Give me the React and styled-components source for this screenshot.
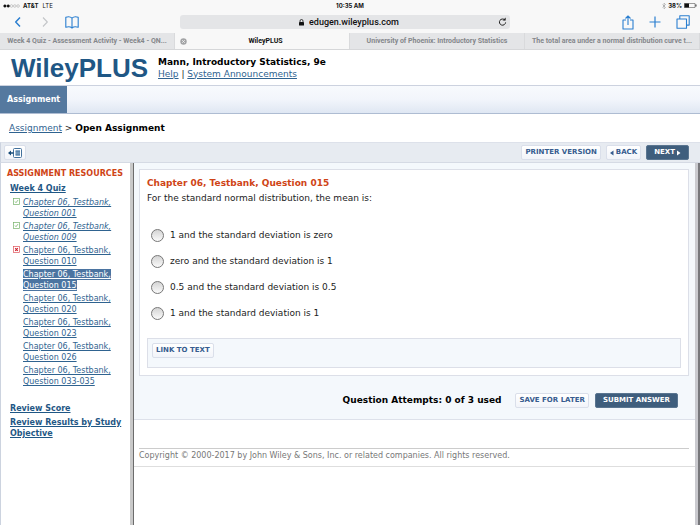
import React, { useState } from 'react'

import styled, { createGlobalStyle, css } from 'styled-components'

const GlobalStyle = createGlobalStyle`
  * {
    box-sizing: border-box;
  }

  body {
    margin: 0;
    background: #ffffff;
    color: #1c1c1c;
    font-family: "DejaVu Sans", Verdana, sans-serif;
    font-size: 9px;
    line-height: 11px;
  }
`

const browserFont = '"Inter", "Liberation Sans", sans-serif'
const linkBlue = '#2f6390'

const Page = styled.div`
  display: flex;
  flex-direction: column;
  min-height: 100vh;
`

/* Browser chrome */

const BrowserChrome = styled.header`
  background: #f8f8f8;
  color: #111111;
  font-family: ${browserFont};
`

const StatusBar = styled.div`
  display: grid;
  grid-template-columns: 1fr auto 1fr;
  align-items: center;
  height: 11px;
  padding: 0 3px;
  font-size: 6px;
  font-weight: 700;
`

const StatusGroup = styled.div`
  display: flex;
  align-items: center;
  justify-content: ${props => props.$end ? 'flex-end' : 'flex-start'};
  gap: ${props => props.$end ? 2 : 3}px;
`

const Network = styled.span`
  font-weight: 400;
  padding-left: 1px;
`

const AddressRow = styled.div`
  display: grid;
  grid-template-columns: 180px 1fr 180px;
  align-items: center;
  height: 22px;
`

const ToolGroup = styled.div`
  display: flex;
  align-items: center;
  gap: ${props => props.$end ? 15 : 13}px;
  justify-content: ${props => props.$end ? 'flex-end' : 'flex-start'};
  padding: ${props => props.$end ? '0 10px 0 0' : '0 0 0 11px'};
`

const IconButton = styled.button`
  display: flex;
  align-items: center;
  justify-content: center;
  padding: 0;
  border: 0;
  background: none;
  color: ${props => props.$muted ? '#c4c6c9' : '#2b7fd0'};
`

const AddressBar = styled.div`
  display: flex;
  align-items: center;
  height: 14px;
  margin-right: 10px;
  padding: 0 3px 0 22px;
  border-radius: 3px;
  background: #e4e5e7;
`

const AddressInput = styled.input`
  width: 92px;
  padding: 0;
  border: 0;
  background: none;
  color: #111111;
  font: 500 9px/12px Roboto, "Liberation Sans", sans-serif;
`

const AddressCenter = styled.div`
  display: flex;
  flex: 1;
  align-items: center;
  justify-content: center;
  gap: 5px;
`

const TabStrip = styled.nav`
  display: grid;
  grid-template-columns: repeat(4, 1fr);
  height: 17px;
  border-bottom: 1px solid #d6d7d9;
`

const Tab = styled.a`
  display: flex;
  align-items: center;
  min-width: 0;
  padding: 0 5px;
  border-right: 1px solid #d9dadc;
  background: ${props => props.$active ? '#f8f8f8' : '#e4e5e7'};
  color: ${props => props.$active ? '#111111' : '#85878b'};
  font: 700 7px/9px Roboto, "Liberation Sans", sans-serif;
  text-decoration: none;
`

const TabTitle = styled.span`
  flex: 1;
  overflow: hidden;
  text-align: center;
  text-overflow: ellipsis;
  white-space: nowrap;
`

/* Course header */

const CourseHeader = styled.div`
  display: flex;
  align-items: center;
  gap: 10px;
  height: 35px;
  padding: 0 11px;
`

const Brand = styled.h1`
  margin: 0;
  color: #1f5785;
  font: 700 26px/32px "Liberation Sans", Arial, sans-serif;
`

const CourseTitle = styled.div`
  color: #000000;
  font-weight: 700;
  line-height: 12px;
`

const CourseLinks = styled.div`
  line-height: 12px;
`

const Link = styled.a`
  color: ${linkBlue};
`

const MainNav = styled.nav`
  display: flex;
  height: 29px;
  border-top: 1px solid #ccd2df;
  border-bottom: 1px solid #aebcd2;
  background: linear-gradient(#f8fafd, #f2f5fb 50%, #dfe7f3);
`

const NavItem = styled.a`
  display: flex;
  align-items: center;
  padding: 0 7px;
  background: #55799f;
  color: #ffffff;
  font-size: 8px;
  font-weight: 700;
  text-decoration: none;
`

const Breadcrumb = styled.div`
  padding: 9px 9px 8px;
`

const Current = styled.strong`
  color: #000000;
`

/* Assignment tool bar */

const ActionBar = styled.div`
  display: flex;
  align-items: center;
  gap: 5px;
  height: 21px;
  padding: 0 11px 0 3px;
  border-top: 1px solid #dde1ea;
  border-bottom: 1px solid #d5dae4;
  border-left: 1px solid #ccd3df;
  background: #e7ebf1;
`

const Button = styled.button`
  display: inline-flex;
  align-items: center;
  justify-content: center;
  gap: 2px;
  height: 15px;
  padding: 0 3px;
  border: 1px solid #dadfea;
  border-radius: 2px;
  background: linear-gradient(#ffffff, #f2f4f9);
  color: #365c8f;
  font: 700 7px/9px "DejaVu Sans", Verdana, sans-serif;
  white-space: nowrap;

  ${props => props.$primary && css`
    border-color: #5a7590;
    background: #3f5e7d;
    color: #ffffff;
    padding: 0 7px;
  `}
`

const CollapseButton = styled(Button)`
  width: 22px;
  margin-right: auto;
  padding: 0;
`

/* Content */

const Columns = styled.div`
  display: flex;
  flex: 1;
`

const Sidebar = styled.aside`
  width: 134px;
  flex-shrink: 0;
  padding: 5px 8px 0 6px;
  border-left: 1px solid #ccd3df;
  border-right: 1px solid #6c6c6c;
  box-shadow: inset -3px 0 0 #c9c9c9;
  font-size: 8px;
`

const SidebarTitle = styled.h2`
  margin: 0 0 4px;
  color: #cf4416;
  font-size: 8px;
  line-height: 11px;
  white-space: nowrap;
`

const StrongLink = styled(Link)`
  display: block;
  margin: 0 0 3px 3px;
  color: #1f5785;
  font-weight: 700;
`

const QuestionList = styled.ul`
  margin: 0 0 16px;
  padding: 0 0 0 6px;
  list-style: none;
`

const QuestionItem = styled.li`
  display: grid;
  grid-template-columns: 7px 1fr;
  gap: 3px;
  margin-bottom: 2px;
`

const QuestionLink = styled(Link)`
  font-style: ${props => props.$done ? 'italic' : 'normal'};
  white-space: pre-line;

  ${props => props.$current && css`
    color: #ffffff;
  `}
`

const Highlight = styled.span`
  padding: 1px 0;
  background: ${props => props.$on ? '#4b74a1' : 'transparent'};
`

const Main = styled.main`
  flex: 1;
  min-width: 0;
  border-right: 2px solid #77777b;
  box-shadow: inset -3px 0 0 #cacacf;
  padding-right: 3px;
`

const Workspace = styled.div`
  padding: 6px 6px 0 5px;
  border-bottom: 1px solid #dde1ea;
  background: #f4f8fc;
`

const QuestionCard = styled.form`
  padding: 6px 7px 7px;
  border: 1px solid #dcdfe8;
  background: #ffffff;
`

const QuestionTitle = styled.h3`
  margin: 0;
  color: #cf4416;
  font-size: 9px;
  line-height: 14px;
`

const Prompt = styled.p`
  margin: 0 0 16px;
  line-height: 16px;
`

const Option = styled.label`
  display: flex;
  align-items: center;
  gap: 6px;
  height: 26px;
  padding-left: 4px;
`

const Radio = styled.input`
  width: 13px;
  height: 13px;
  margin: 0;
  border: 1px solid #777777;
  border-radius: 50%;
  appearance: none;
  background: linear-gradient(#d4d4d4, #fafafa);

  &:checked {
    background: radial-gradient(#3f5e7d 35%, #f2f2f2 40%);
  }
`

const LinkBox = styled.div`
  display: flex;
  align-items: flex-start;
  height: 30px;
  margin-top: 12px;
  padding: 4px;
  border: 1px solid #dcdfe8;
  background: #f4f8fc;
`

const SubmitRow = styled.div`
  display: flex;
  align-items: center;
  justify-content: flex-end;
  gap: 6px;
  padding: 17px 11px 11px;
`

const Attempts = styled.strong`
  margin-right: 8px;
  color: #000000;
`

const Footer = styled.footer`
  padding: 28px 6px 5px 5px;
  border-bottom: 1px solid #dedede;
  color: #777777;
  font-size: 8px;
`

const Copyright = styled.div`
  padding-top: 1px;
  border-top: 1px solid #cccccc;
`

/* Icons */

const Stroke = ({ width, height, box, weight = 1, children }) => (
  <svg width={width} height={height} viewBox={box} fill='none' stroke='currentColor'
    strokeWidth={weight} strokeLinejoin='round' aria-hidden='true'>
    {children}
  </svg>
)

const SignalDots = () => (
  <svg width='17' height='4' viewBox='0 0 17 4' aria-hidden='true'>
    {[1.9, 5.2, 8.5, 11.8, 15.1].map((x, i) => (
      <circle key={x} cx={x} cy='2' r='1.3' fill={i < 2 ? '#111' : 'none'}
        stroke={i < 2 ? '#111' : '#888'} strokeWidth='.4' />
    ))}
  </svg>
)

const Bluetooth = () => (
  <Stroke width='4' height='6' box='0 0 4 6' weight={0.5}>
    <path stroke='#888' d='M.5 1.5l3 3L2 5.8V.2l1.5 1.3-3 3' />
  </Stroke>
)

const Battery = () => (
  <svg width='13' height='5' viewBox='0 0 13 5' aria-hidden='true'>
    <rect x='.3' y='.3' width='10.8' height='4.4' rx='.7' fill='none' stroke='#111' strokeWidth='.5' />
    <rect x='.5' y='.5' width='4.5' height='4' fill='#111' />
    <path d='M11.6 1.6h.8v1.8h-.8z' fill='#111' />
  </svg>
)

const Chevron = ({ right }) => (
  <Stroke width='14' height='12' box='0 0 14 12' weight={right ? 1.1 : 1.5}>
    <path d={right ? 'M5 1.5L9.3 6 5 10.5' : 'M9 1.5L4.7 6 9 10.5'} />
  </Stroke>
)

const Book = () => (
  <Stroke width='14' height='13' box='0 0 14 13' weight={1.1}>
    <path d='M7 2.2C5.5.7 2.8.6.8 1.3v10c2-.7 4.7-.6 6.2.7 1.5-1.3 4.2-1.4 6.2-.7v-10C11.2.6 8.5.7 7 2.2zM7 2.2V12' />
  </Stroke>
)

const Lock = () => (
  <svg width='5' height='7' viewBox='0 0 5 7' aria-hidden='true'>
    <rect y='3' width='5' height='3.6' rx='.4' fill='#111' />
    <path d='M1 3.2V2a1.5 1.5 0 0 1 3 0v1.2' fill='none' stroke='#111' strokeWidth='.8' />
  </svg>
)

const Reload = () => (
  <svg width='9' height='10' viewBox='0 0 9 10' fill='none' aria-hidden='true'>
    <path d='M6.8 3A3.1 3.1 0 1 0 7.6 5.4' stroke='#222' />
    <path d='M4.5 3.6h3.2V.6z' fill='#222' />
  </svg>
)

const Share = () => (
  <Stroke width='12' height='15' box='0 0 12 15' weight={1.1}>
    <path d='M4 5H1v9h10V5H8M6 10V1M3.5 3.5L6 1l2.5 2.5' />
  </Stroke>
)

const Plus = () => (
  <Stroke width='12' height='12' box='0 0 12 12' weight={1.2}>
    <path d='M6 .5v11M.5 6h11' />
  </Stroke>
)

const Pages = () => (
  <Stroke width='14' height='14' box='0 0 14 14' weight={1.1}>
    <path d='M1 4h9.5v9.3H1zM3.8 4V.8h9.4v9.3h-2.7' />
  </Stroke>
)

const CloseTab = () => (
  <svg width='7' height='7' viewBox='0 0 7 7' aria-hidden='true'>
    <circle cx='3.5' cy='3.5' r='3.2' fill='#a3a4a6' />
    <path d='M2.2 2.2l2.6 2.6M4.8 2.2L2.2 4.8' stroke='#f8f8f8' strokeWidth='.8' />
  </svg>
)

const CollapseIcon = () => (
  <svg width='14' height='10' viewBox='0 0 14 10' aria-hidden='true'>
    <rect x='5.5' y='.5' width='8' height='9' rx='1' fill='#fff' stroke='#42719c' />
    <path d='M7.5 2h4.5v6H7.5z' fill='#87a8c6' />
    <path d='M7.5 3.5H12M7.5 5H12M7.5 6.5H12' stroke='#42719c' strokeWidth='.6' />
    <path d='M0 5l3-2.5v1.7h2.5v1.6H3v1.7z' fill='#174b78' />
  </svg>
)

const Arrow = ({ right }) => (
  <svg width='4' height='6' viewBox='0 0 4 6' aria-hidden='true'>
    <path d={right ? 'M0 .5L3.5 3 0 5.5z' : 'M3.5 .5L0 3l3.5 2.5z'} fill='currentColor' />
  </svg>
)

const StatusSvg = styled.svg`
  margin-top: 1px;
`

const StatusMark = ({ status }) => {
  if (!status) {
    return <span />
  }
  const color = status === 'correct' ? '#76b26a' : '#e0525a'
  return (
    <StatusSvg width='7' height='7' viewBox='0 0 7 7' fill='none' role='img' aria-label={status}>
      <rect x='.5' y='.5' width='6' height='6' fill='#fff' stroke={color} strokeWidth='.7' />
      {status === 'correct'
        ? <path d='M2 3.5l1 1.2 2-2.6' stroke={color} strokeWidth='.8' />
        : <path d='M2.2 2.2l2.6 2.6M4.8 2.2L2.2 4.8' stroke='#d01f2c' strokeWidth='1.1' />}
    </StatusSvg>
  )
}

const questions = [
  { id: '001', status: 'correct' },
  { id: '009', status: 'correct' },
  { id: '010', status: 'incorrect' },
  { id: '015', current: true },
  { id: '020' },
  { id: '023' },
  { id: '026' },
  { id: '033-035' }
]

const options = [
  '1 and the standard deviation is zero',
  'zero and the standard deviation is 1',
  '0.5 and the standard deviation is 0.5',
  '1 and the standard deviation is 1'
]

const Browser = () => (
  <BrowserChrome>
    <StatusBar>
      <StatusGroup><SignalDots /><span>AT&amp;T</span><Network>LTE</Network></StatusGroup>
      <span>10:35 AM</span>
      <StatusGroup $end><Bluetooth /><span>38%</span><Battery /></StatusGroup>
    </StatusBar>
    <AddressRow>
      <ToolGroup>
        <IconButton aria-label='Go back'><Chevron /></IconButton>
        <IconButton aria-label='Go forward' $muted><Chevron right /></IconButton>
        <IconButton aria-label='Bookmarks'><Book /></IconButton>
      </ToolGroup>
      <AddressBar>
        <AddressCenter>
          <Lock />
          <AddressInput aria-label='Address' defaultValue='edugen.wileyplus.com' />
        </AddressCenter>
        <IconButton aria-label='Reload'><Reload /></IconButton>
      </AddressBar>
      <ToolGroup $end>
        <IconButton aria-label='Share'><Share /></IconButton>
        <IconButton aria-label='New tab'><Plus /></IconButton>
        <IconButton aria-label='Show tabs'><Pages /></IconButton>
      </ToolGroup>
    </AddressRow>
    <TabStrip>
      <Tab href='#quiz'><TabTitle>Week 4 Quiz - Assessment Activity - Week4 - QN...</TabTitle></Tab>
      <Tab href='#wiley' $active><CloseTab /><TabTitle>WileyPLUS</TabTitle></Tab>
      <Tab href='#phoenix'><TabTitle>University of Phoenix: Introductory Statistics</TabTitle></Tab>
      <Tab href='#area'><TabTitle>The total area under a normal distribution curve t...</TabTitle></Tab>
    </TabStrip>
  </BrowserChrome>
)

const Resources = () => (
  <Sidebar>
    <SidebarTitle>ASSIGNMENT RESOURCES</SidebarTitle>
    <StrongLink href='#week4'>Week 4 Quiz</StrongLink>
    <QuestionList>
      {questions.map(({ id, status, current }) => (
        <QuestionItem key={id}>
          <StatusMark status={status} />
          <QuestionLink href={`#q${id}`} $done={status === 'correct'} $current={current}>
            <Highlight $on={current}>{`Chapter 06, Testbank,\nQuestion ${id}`}</Highlight>
          </QuestionLink>
        </QuestionItem>
      ))}
    </QuestionList>
    <StrongLink href='#score'>Review Score</StrongLink>
    <StrongLink href='#results'>Review Results by Study Objective</StrongLink>
  </Sidebar>
)

const Question = () => {
  const [answer, setAnswer] = useState(null)

  return (
    <Workspace>
      <QuestionCard>
        <QuestionTitle>Chapter 06, Testbank, Question 015</QuestionTitle>
        <Prompt>For the standard normal distribution, the mean is:</Prompt>
        {options.map(option => (
          <Option key={option}>
            <Radio type='radio' name='answer' checked={answer === option}
              onChange={() => setAnswer(option)} />
            {option}
          </Option>
        ))}
        <LinkBox><Button type='button'>LINK TO TEXT</Button></LinkBox>
      </QuestionCard>
      <SubmitRow>
        <Attempts>Question Attempts: 0 of 3 used</Attempts>
        <Button>SAVE FOR LATER</Button>
        <Button $primary>SUBMIT ANSWER</Button>
      </SubmitRow>
    </Workspace>
  )
}

const App = () => (
  <Page>
    <GlobalStyle />
    <Browser />
    <CourseHeader>
      <Brand>WileyPLUS</Brand>
      <div>
        <CourseTitle>Mann, Introductory Statistics, 9e</CourseTitle>
        <CourseLinks>
          <Link href='#help'>Help</Link> | <Link href='#news'>System Announcements</Link>
        </CourseLinks>
      </div>
    </CourseHeader>
    <MainNav><NavItem href='#assignment'>Assignment</NavItem></MainNav>
    <Breadcrumb>
      <Link href='#assignment'>Assignment</Link> &gt; <Current>Open Assignment</Current>
    </Breadcrumb>
    <ActionBar>
      <CollapseButton aria-label='Hide resources'><CollapseIcon /></CollapseButton>
      <Button>PRINTER VERSION</Button>
      <Button><Arrow />BACK</Button>
      <Button $primary>NEXT<Arrow right /></Button>
    </ActionBar>
    <Columns>
      <Resources />
      <Main>
        <Question />
        <Footer>
          <Copyright>
            Copyright © 2000-2017 by John Wiley &amp; Sons, Inc. or related companies. All rights reserved.
          </Copyright>
        </Footer>
      </Main>
    </Columns>
  </Page>
)

export default App
